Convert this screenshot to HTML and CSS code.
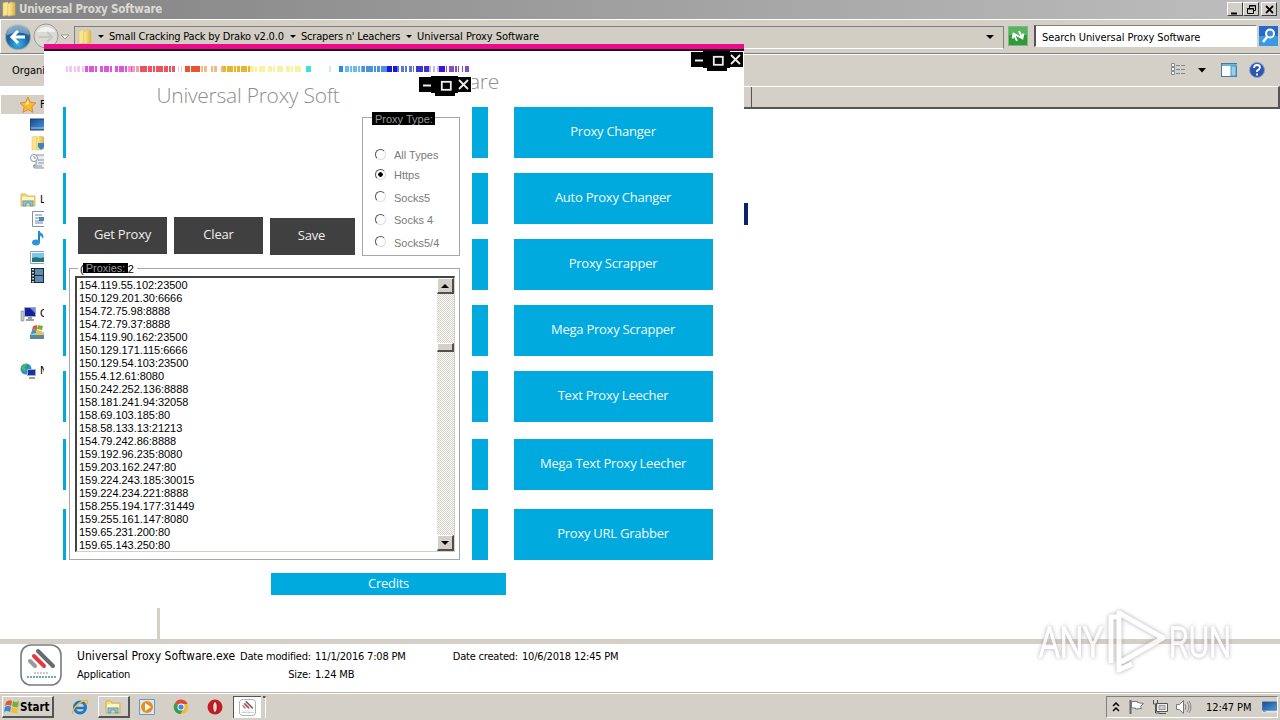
FILE: index.html
```html
<!DOCTYPE html>
<html lang="en">
<head>
    <meta charset="UTF-8">
    <meta name="viewport" content="width=device-width, initial-scale=1.0">
    <title>Universal Proxy Software</title>
    <link rel="stylesheet" href="styles.css">
</head>
<body>
<svg width="0" height="0" class="defs">
    <defs>
        <linearGradient id="gold" x1="0" x2="1"><stop offset="0" stop-color="#fdf0a6"/><stop offset="1" stop-color="#dfb23c"/></linearGradient>
        <radialGradient id="blue" cx=".5" cy=".8" r=".8"><stop offset="0" stop-color="#38b4e8"/><stop offset=".6" stop-color="#175f9e"/><stop offset="1" stop-color="#4b85af"/></radialGradient>
        <linearGradient id="screen" x1="0" y1="0" x2="1" y2="1"><stop offset="0" stop-color="#174a91"/><stop offset="1" stop-color="#4e9be0"/></linearGradient>
        <symbol id="folder" viewBox="0 0 16 16"><path d="M2 2l5-1v13l-5 1z" fill="#f8e58c" stroke="#e0c46c" stroke-width=".6"/><path d="M7 3l3-2 4 1v12l-7 1z" fill="url(#gold)" stroke="#dcb85a" stroke-width=".6"/></symbol>
        <symbol id="library" viewBox="0 0 16 16"><path d="M1 2h5l1 2h8v10H1z" fill="#f5dc77" stroke="#c8a440" stroke-width=".7"/><path d="M2 5h12v3H2z" fill="#fff6c2"/><path d="M3 14V9h10v5h-3v-3H6v3z" fill="#83c6ea" stroke="#3c88b9" stroke-width=".6"/></symbol>
        <symbol id="appicon" viewBox="0 0 42 42"><rect x="1" y="1" width="40" height="40" rx="10" fill="#fff" stroke="#777c80" stroke-width="1.6"/><g stroke-linecap="round" stroke-width="4"><path d="M18 7l15 15" stroke="#666b6f"/><path d="M14 12l10 10" stroke="#e23b3e"/><path d="M10 17l5 5" stroke="#96999e"/></g><path d="M14 29h14" stroke="#c8cccc" stroke-width="2" stroke-dasharray="2 1"/><path d="M7 33h29" stroke="#76a9a9" stroke-width="2" stroke-dasharray="2 1"/></symbol>
        <symbol id="winbtns" viewBox="0 0 52 20"><path d="M0 1h12V0h27v1h13v15H39v1h-3v3H16v-3h-4v-1H0z"/><path d="M4 9.500h8" stroke="#eee" stroke-width="2"/><rect x="22.8" y="5.800" width="9" height="8" fill="none" stroke="#eee" stroke-width="1.8"/><path d="M40 4l9 9m0-9l-9 9" stroke="#eee" stroke-width="1.8"/></symbol>
        <symbol id="desktop" viewBox="0 0 16 12"><path d="M0 0h16v12H0z" fill="#dce6ee"/><path d="M.5.5h15v9H.5z" fill="url(#screen)" stroke="#1a4274" stroke-width=".5"/><path d="M1 10.5h3" stroke="#3a7fb8"/></symbol>
    </defs>
</svg>

<div class="explorer">
    <div class="titlebar">
        <svg class="ico16"><use href="#folder"/></svg>
        <span class="caption">Universal Proxy Software</span>
        <div class="sysbtns">
            <svg width="16" height="14"><path d="M3 10.5h6" stroke="#000" stroke-width="2"/></svg>
            <svg width="16" height="14"><path d="M5.500 5V2.500h6v5H9.500M5 3h7M3.500 5.500h6v5h-6zM3 6h7" fill="none" stroke="#000"/></svg>
            <svg width="16" height="14" class="close"><path d="M4 3l7 7m0-7l-7 7" stroke="#000" stroke-width="1.8"/></svg>
        </div>
    </div>

    <div class="navbar">
        <svg class="backfwd" width="68" height="30">
            <circle cx="14" cy="16" r="13" fill="#a2a6a6"/><circle cx="14" cy="16" r="12" fill="url(#blue)"/>
            <path d="M3 14a11 11 0 0 1 22 0q-10-5-22 0z" fill="#fff" opacity=".35"/>
            <path d="M21 16H8m6-6l-6 6 6 6" fill="none" stroke="#fff" stroke-width="3"/>
            <circle cx="42" cy="15" r="12" fill="#dcdad5" stroke="#9b9994"/><path d="M33 11a10 9 0 0 1 18 0z" fill="#f2f1ee"/><path d="M35 16h13m-5-5l5 5-5 5" fill="none" stroke="#c9c7c2" stroke-width="2"/>
            <path d="M57 14h8l-4 4z" fill="#fff" stroke="#888" stroke-width=".8"/>
        </svg>
        <div class="address">
            <svg class="ico16"><use href="#folder"/></svg>
            <i class="arrow"></i><span class="crumb c1">Small Cracking Pack by Drako v2.0.0</span>
            <i class="arrow"></i><span class="crumb c2">Scrapers n' Leachers</span>
            <i class="arrow"></i><span class="crumb c3">Universal Proxy Software</span>
            <i class="arrow big"></i>
        </div>
        <svg class="refresh" width="20" height="20"><rect x=".5" y=".5" width="19" height="19" fill="#2d9b38" stroke="#86b288"/><path d="M1 1h18v8H1z" fill="#58b45c"/><path d="M7 14V7M4 10l3-4 3 4M13 6v7m-3-3l3 4 3-4" fill="none" stroke="#fff" stroke-width="1.900" transform="rotate(-25 10 10)"/></svg>
        <div class="search"><span>Search Universal Proxy Software</span></div>
        <svg class="mag" width="19" height="20"><rect width="19" height="20" fill="#2669c9"/><path d="M0 10h19v10H0z" fill="#3a9ae4"/><circle cx="11" cy="7.500" r="4" fill="#3f86d6" stroke="#fff" stroke-width="2"/><path d="M8 11l-4 5" stroke="#fff" stroke-width="2.500"/></svg>
    </div>

    <div class="toolbar">
        <span class="organize">Organi</span>
        <svg class="views" width="100" height="18">
            <g fill="#fff" stroke="#7b8a93"><path d="M1.500 1.500h3v3h-3zM1.500 5.500h3v3h-3zM1.500 9.500h3v3h-3z"/></g><path d="M6 3.500h10M6 7.500h10M6 11.500h10" stroke="#7b8a93" stroke-dasharray="4 1"/>
            <path d="M28 6h8l-4 4.500z"/>
            <rect x="51.500" y="1.500" width="15" height="13" fill="#fff" stroke="#467b9e"/><path d="M52 3h15" stroke="#71b3d7" stroke-width="2"/><path d="M61 4h5v10h-5z" fill="#99d0e9" stroke="#4c94bc"/>
            <circle cx="87" cy="8" r="7.500" fill="#2c56b2" stroke="#8ba0c9"/><path d="M84 6q0-3 3-3t3 2.500q0 1.500-3 3.200V10m0 1.500v2" fill="none" stroke="#fff" stroke-width="1.800"/>
        </svg>
    </div>

    <div class="main">
        <div class="sidebar">
            <div class="group fav">
                <div class="item head"><svg class="ico16"><path d="M8 0l2.400 5.300 5.600.6-4.200 3.800 1.300 5.700L8 12.500l-5.100 2.900 1.300-5.700L0 5.900l5.600-.6z" fill="#fdb935" stroke="#d9801c" stroke-width=".8"/><path d="M8 3l1 4-4 1z" fill="#fff2a5"/></svg><span>F</span></div>
                <div class="item"><svg class="ico16"><rect y="3" width="16" height="11" fill="url(#screen)" stroke="#1a3e70"/><path d="M1 12h15" stroke="#a2c4db"/></svg></div>
                <div class="item"><svg class="ico16"><use href="#folder"/><path d="M8 8h6v4l-3 3-3-3z" fill="#3287c9"/></svg></div>
                <div class="item"><svg class="ico16"><path d="M6 1h9v13H4v-3h2z" fill="#e8edf0" stroke="#8396a3"/><circle cx="4" cy="4" r="3.500" fill="#fff" stroke="#8396a3"/><path d="M4 2v2h2M8 6h6M8 9h6M3 12h9" stroke="#8396a3" fill="none"/></svg></div>
            </div>
            <div class="group lib">
                <div class="item head"><svg class="ico16"><use href="#library"/></svg><span>L</span></div>
                <div class="item"><svg class="ico16"><path d="M2.500.5h13v15h-13z" fill="#fff" stroke="#7d94a6"/><path d="M5 4h7M5 7h4M5 10h8M5 12h8" stroke="#6b87a3"/><path d="M9 6h5v4H9z" fill="#4b87bd"/></svg></div>
                <div class="item"><svg class="ico16"><path d="M9 1v11" stroke="#2581c8" stroke-width="2"/><ellipse cx="6" cy="12.500" rx="4" ry="3" fill="#2f93d9"/><path d="M9 0c1 4 6 3 4 9-1-3-3-3-4-4z" fill="#2f93d9"/></svg></div>
                <div class="item"><svg class="ico16"><path d="M.5 2.500h15v12H.5z" fill="#fff" stroke="#8ca4b0"/><path d="M2 4h14v5H2z" fill="#7ec5ef"/><path d="M2 13V9l4-1 4 1 6-1v5z" fill="#28727b"/></svg></div>
                <div class="item"><svg class="ico16"><path d="M1 0h15v15H1z" fill="#20292e"/><path d="M5 1h8v6H5zM5 8h8v6H5z" fill="#4a91c6"/><path d="M3 1v14M15 1v14" stroke="#fff" stroke-width="1.500" stroke-dasharray="1.500 1.500"/><path d="M6 5l3-2 3 3M6 12l3-2 3 3" stroke="#c8734b" fill="none"/></svg></div>
            </div>
            <div class="group comp">
                <div class="item head"><svg class="ico16"><path d="M1 5h3v10H1z" fill="#bfc9c6" stroke="#7f8c89" stroke-width=".6"/><path d="M4.500 1.500h11v9h-11z" fill="#151fa3" stroke="#a3adb5"/><path d="M10 2h5v5z" fill="#6591e3"/><path d="M8 11h4v2h2v2H6v-2h2z" fill="#97a2aa"/></svg><span>C</span></div>
                <div class="item"><svg class="ico16"><path d="M0 9h16v5H0z" fill="#5b8799"/><path d="M1 7h14l1 3H0z" fill="#b2c7ce"/><path d="M3 1l4-1v4l-5 1z" fill="#e65b25"/><path d="M8 0l5 1-1 4-5-1z" fill="#78ae37"/><path d="M2 5l5-1-1 4-5 1z" fill="#3c93d4"/><path d="M7 5l5 1-1 4-5-1z" fill="#f7c12c"/></svg></div>
            </div>
            <div class="group net">
                <div class="item head"><svg class="ico16"><circle cx="6" cy="6" r="5.500" fill="#2493c9"/><path d="M1 5q3-5 6-4-1 3-2 3t1 3q-2 3-5-2z" fill="#59b848"/><path d="M7.500 6.500h8v6h-8z" fill="#1732a9" stroke="#a7b1ba"/><path d="M9 15h6" stroke="#7d858d" stroke-width="1.500"/></svg><span>N</span></div>
            </div>
        </div>
        <div class="splitter"></div>
        <div class="files">
            <div class="colhead"></div>
            <div class="selected"></div>
        </div>
    </div>

    <div class="details">
        <svg class="exe" width="42" height="42"><use href="#appicon"/></svg>
        <div class="names"><span class="fname">Universal Proxy Software.exe</span><span class="ftype">Application</span></div>
        <dl class="facts">
            <dt>Date modified:</dt><dd>11/1/2016 7:08 PM</dd>
            <dt>Size:</dt><dd>1.24 MB</dd>
        </dl>
        <dl class="facts created">
            <dt>Date created:</dt><dd>10/6/2018 12:45 PM</dd>
        </dl>
    </div>
</div>

<div class="app">
    <div class="accent"></div>
    <svg class="winbtns" width="52" height="20"><use href="#winbtns"/></svg>
    <div class="apptitle">are</div>
    <div class="tiles">
        <b></b><b></b><div class="tile">Proxy Changer</div>
        <b></b><b></b><div class="tile">Auto Proxy Changer</div>
        <b></b><b></b><div class="tile">Proxy Scrapper</div>
        <b></b><b></b><div class="tile">Mega Proxy Scrapper</div>
        <b></b><b></b><div class="tile">Text Proxy Leecher</div>
        <b></b><b></b><div class="tile">Mega Text Proxy Leecher</div>
        <b></b><b></b><div class="tile">Proxy URL Grabber</div>
    </div>
    <div class="credits">Credits</div>

    <div class="child">
        <svg class="strip" width="406" height="7">
            <g stroke-width="6" fill="none">
                <path d="M0 3h28" stroke="#f3c4f6" stroke-dasharray="2 1 3 2"/>
                <path d="M19 3h50" stroke="#df54dc" stroke-dasharray="3 1 5 1 2 3"/>
                <path d="M62 3h20" stroke="#f39bb8" stroke-dasharray="3 1"/>
                <path d="M74 3h35" stroke="#e8555e" stroke-dasharray="7 1 4 1 2 1"/>
                <path d="M112 3h5" stroke="#f8c6c6" stroke-dasharray="1 2"/>
                <path d="M119 3h17" stroke="#e65432" stroke-dasharray="5 1 9 1"/>
                <path d="M135 3h22" stroke="#f7b984" stroke-dasharray="2 1 3 4"/>
                <path d="M157 3h28" stroke="#e8b52c" stroke-dasharray="3 1 6 1 2 1"/>
                <path d="M184 3h52" stroke="#f9f3a0" stroke-dasharray="4 1 2 2 6 3"/>
                <path d="M240 3h5" stroke="#35e5de"/><path d="M263 3h2" stroke="#c5efec"/>
                <path d="M273 3h4" stroke="#238ce8"/><path d="M279 3h18" stroke="#6bbaf0" stroke-dasharray="4 1 2 1"/>
                <path d="M296 3h28" stroke="#4a91df" stroke-dasharray="3 1 7 1 2 1"/>
                <path d="M321 3h10" stroke="#1717d7" stroke-dasharray="5 1"/>
                <path d="M331 3h17" stroke="#5578df" stroke-dasharray="2 2 3 1"/>
                <path d="M350 3h14" stroke="#3b35cf" stroke-dasharray="7 1"/><path d="M363 3h16" stroke="#c7b4ec" stroke-dasharray="2 2"/>
                <path d="M373 3h6" stroke="#3814d5"/><path d="M380 3h23" stroke="#884cc2" stroke-dasharray="1 2 5 1 2 1 1 3"/>
            </g>
        </svg>
        <svg class="winbtns" width="52" height="20"><use href="#winbtns"/></svg>
        <h1>Universal Proxy Soft</h1>
        <div class="controls">
            <div class="btn">Get Proxy</div>
            <div class="btn">Clear</div>
            <div class="btn save">Save</div>
            <div class="types">
                <span class="legend">Proxy Type:</span>
                <label><i class="radio"></i><span>All Types</span></label>
                <label><i class="radio on"></i><span>Https</span></label>
                <label><i class="radio"></i><span>Socks5</span></label>
                <label><i class="radio"></i><span>Socks 4</span></label>
                <label><i class="radio"></i><span>Socks5/4</span></label>
            </div>
        </div>
        <div class="proxies">
            <div class="count">(<span>Proxies:</span>2</div>
            <div class="listbox">
                <ul>
                    <li>154.119.55.102:23500</li>
                    <li>150.129.201.30:6666</li>
                    <li>154.72.75.98:8888</li>
                    <li>154.72.79.37:8888</li>
                    <li>154.119.90.162:23500</li>
                    <li>150.129.171.115:6666</li>
                    <li>150.129.54.103:23500</li>
                    <li>155.4.12.61:8080</li>
                    <li>150.242.252.136:8888</li>
                    <li>158.181.241.94:32058</li>
                    <li>158.69.103.185:80</li>
                    <li>158.58.133.13:21213</li>
                    <li>154.79.242.86:8888</li>
                    <li>159.192.96.235:8080</li>
                    <li>159.203.162.247:80</li>
                    <li>159.224.243.185:30015</li>
                    <li>159.224.234.221:8888</li>
                    <li>158.255.194.177:31449</li>
                    <li>159.255.161.147:8080</li>
                    <li>159.65.231.200:80</li>
                    <li>159.65.143.250:80</li>
                </ul>
                <div class="scroll">
                    <div class="sbtn"><svg width="12" height="12"><path d="M2 8h8L6 4z"/></svg></div>
                    <div class="thumb"></div>
                    <div class="sbtn"><svg width="12" height="12"><path d="M2 4h8L6 8z"/></svg></div>
                </div>
            </div>
        </div>
    </div>
</div>

<svg class="watermark" width="240" height="90">
    <g fill="none" stroke="#fff" stroke-width="5" stroke-linejoin="round">
        <path d="M80 62V16h8M88 60V12l44 25-42 24M88 60v9l13-6"/>
    </g>
    <text x="8" y="56" textLength="64" lengthAdjust="spacingAndGlyphs">ANY</text>
    <text x="138" y="56" textLength="62" lengthAdjust="spacingAndGlyphs">RUN</text>
</svg>

<div class="taskbar">
    <div class="start"><svg width="16" height="16"><path d="M2 3q3-3 6-1L7 7Q4 5 1 7z" fill="#e8572a"/><path d="M9 2q3 2 6 0l-1 6q-3 1-6-1z" fill="#74b43b"/><path d="M1 8q3-2 6 0l-1 5q-3-2-6 0z" fill="#3a87d6"/><path d="M8 8q3 2 6 1l-1 5q-3 1-6-1z" fill="#f5bf2b"/></svg><span>Start</span></div>
    <div class="quick">
        <div class="q"><svg class="ico16"><circle cx="8" cy="8.500" r="5.500" fill="none" stroke="#1c78c9" stroke-width="3"/><path d="M4 9h10" stroke="#1c78c9" stroke-width="2.500"/><path d="M1 15C-1 11 8 1 15 1.500q2 1-1 4" fill="none" stroke="#eeb931" stroke-width="1.500"/></svg></div>
        <div class="q raised"><svg class="ico16"><use href="#library"/></svg></div>
        <div class="q"><svg class="ico16"><path d="M.5.5h15v15H.5z" fill="#d8eaf5" stroke="#5f9cc8"/><circle cx="8" cy="8" r="6" fill="#f18a1a"/><path d="M6 4l6 4-6 4z" fill="#fff"/></svg></div>
        <div class="q"><svg class="ico16"><circle cx="8" cy="8" r="7" fill="#f0bd2d"/><path d="M8 8L2 4a7 7 0 0 1 12.500 1H8z" fill="#dc4a3b"/><path d="M8 8l-6-4a7 7 0 0 0 5.500 11L11 9z" fill="#369c52"/><circle cx="8" cy="8" r="3.500" fill="#fff"/><circle cx="8" cy="8" r="2.600" fill="#4384e8"/></svg></div>
        <div class="q"><svg class="ico16"><circle cx="8" cy="8" r="7.500" fill="#c41c22"/><ellipse cx="8" cy="8" rx="2.300" ry="5.500" fill="#f1d8d6" stroke="#921216"/></svg></div>
        <div class="q active"><svg width="17" height="17"><use href="#appicon"/></svg></div>
        <div class="edge"></div>
    </div>
    <div class="tray">
        <svg width="12" height="16"><path d="M3 7l3-3 3 3M3 12l3-3 3 3" fill="none" stroke="#000" stroke-width="1.500"/></svg>
        <svg width="17" height="16" class="flag"><path d="M2.500 1v14" stroke="#666" stroke-width="2"/><path d="M3.500 2.500h6v1l6 1-3 3 1 2-6 .5v-1h-4z" fill="#fff" stroke="#777"/></svg>
        <svg width="17" height="16" class="lan"><path d="M4.500 4.500h11v8h-11zM7 14.500h7" fill="#eee" stroke="#555"/><path d="M7 6.500h6v4H7z" fill="#ccc" stroke="#999"/><path d="M1.500 1v4h4V1M3.500 5v9h4" fill="none" stroke="#555"/></svg>
        <svg width="17" height="16" class="vol"><path d="M1.500 5.500h3l4-4v13l-4-4h-3z" fill="#fff" stroke="#777"/><path d="M10 5q2 3 0 6M12 3q4 5 0 10M14 2q4 6 0 12" fill="none" stroke="#888"/></svg>
        <span class="clock">12:47 PM</span>
        <svg width="15" height="12" class="desk"><use href="#desktop"/></svg>
    </div>
</div>
</body>
</html>
```
FILE: styles.css
```css
* {
    box-sizing: border-box;
}

body {
    margin: 0;
    width: 1280px;
    height: 720px;
    overflow: hidden;
    background: #fff;
    color: #000;
    font-family: "DejaVu Sans Condensed", "DejaVu Sans", sans-serif;
    font-size: 11px;
    line-height: 14px;
    white-space: nowrap;
    display: flex;
    flex-direction: column;
}

svg {
    display: block;
    flex: none;
}

.defs {
    position: absolute;
}

.ico16 {
    width: 16px;
    height: 16px;
}

/* explorer window */
.explorer {
    height: 692px;
    display: flex;
    flex-direction: column;
}

.titlebar {
    height: 19px;
    background: linear-gradient(90deg, #838383, #bebebe);
    display: flex;
    align-items: center;
    padding: 0 3px 1px 1px;
}

.caption {
    margin-left: 2px;
    color: #dcdad4;
    font-weight: bold;
    font-size: 11.5px;
    letter-spacing: -.2px;
}

.sysbtns {
    margin-left: auto;
    display: flex;
}

.sysbtns svg {
    background: #d4d0c8;
    border-top: 1px solid #fff;
    border-left: 1px solid #fff;
    border-right: 1px solid #404040;
    border-bottom: 1px solid #404040;
}

.sysbtns .close {
    margin-left: 2px;
}

.navbar {
    height: 35px;
    background: #d4d0c8;
    border-top: 1px solid #fff;
    border-bottom: 1px solid #808080;
    box-shadow: inset 1px 0 #fff, inset 0 2px #d4d0c8;
    display: flex;
    padding: 0 2px 0 4px;
}

.backfwd {
    margin-top: 1px;
}

.address {
    width: 930px;
    height: 23px;
    margin: 6px 0 0 2px;
    border: 1px solid #808080;
    border-bottom-color: #fff;
    display: flex;
    align-items: center;
    padding-left: 2px;
    background: #d2cec4;
}

.address .ico16 {
    margin-top: -2px;
}

.crumb {
    margin-top: -2px;
    width: 175px;
    letter-spacing: -.2px;
}

.c2 {
    width: 99px;
}

.c3 {
    letter-spacing: -.05px;
}

.arrow {
    border: 3px solid transparent;
    border-top: 3px solid #000;
    border-bottom: 0;
    margin: -2px 5px 0 6px;
}

.address .ico16 + .arrow {
    margin-left: 5px;
}

.arrow.big {
    border-width: 4px 4px 0;
    margin-left: auto;
    margin-right: 9px;
}

.refresh {
    margin: 6px 0 0 4px;
}

.search {
    width: 223px;
    height: 22px;
    margin: 5px 0 0 6px;
    background: #fff;
    border: 1px solid #fff;
    border-top: 1px solid #808080;
    border-left: 2px solid #555;
    padding: 5px 0 0 6px;
    letter-spacing: -.06px;
}

.mag {
    margin: 6px 0 0 auto;
}

.toolbar {
    height: 32px;
    background: #d4d0c8;
    border-top: 1px solid #fff;
    display: flex;
    align-items: center;
}

.organize {
    margin-left: 12px;
}

.views {
    margin-left: auto;
    margin-right: 10px;
}

.main {
    flex: 1;
    display: flex;
}

.sidebar {
    width: 157px;
    padding-top: 9px;
}

.item {
    height: 19px;
    padding-left: 30px;
    display: flex;
    align-items: center;
}

.item.head {
    padding-left: 20px;
}

.item span {
    margin-left: 4px;
}

.fav .head {
    background: #d4d0c8;
    margin-left: 1px;
    padding-left: 19px;
}

.lib {
    margin-top: 19px;
}

.comp {
    margin-top: 19px;
}

.net {
    margin-top: 19px;
}

.splitter {
    width: 3px;
    height: 553px;
    background: #d4d0c8;
}

.files {
    flex: 1;
}

.colhead {
    height: 23px;
    margin-left: 584px;
    background: #d4d0c8;
    border-top: 1px solid #fff;
    border-right: 2px solid #555;
    border-bottom: 2px solid #555;
    box-shadow: inset 7px 0 #d4d0c8, inset 8px 0 #555;
}

.selected {
    width: 4px;
    height: 22px;
    margin: 94px 0 0 584px;
    background: #0a246a;
}

.details {
    height: 53px;
    border-top: 5px solid #d4d0c8;
    display: flex;
    padding-left: 20px;
}

.names {
    margin-left: 15px;
    width: 161px;
}

.names span {
    display: block;
    margin-top: 5px;
    letter-spacing: -.2px;
}

.names .fname {
    font-size: 12px;
    letter-spacing: .05px;
}

.facts {
    display: grid;
    grid-template-columns: 73px 134px;
    row-gap: 4px;
    margin: 6px 0 0;
    align-content: start;
    letter-spacing: -.18px;
}

.facts dt {
    text-align: right;
}

.facts dd {
    margin: 0 0 0 4px;
}

.facts.created {
    letter-spacing: -.2px;
}

/* application window */
.app {
    position: absolute;
    left: 44px;
    top: 44px;
    width: 700px;
    height: 564px;
    background: #fff;
    font-family: "Open Sans", "Noto Sans", sans-serif;
}

.accent {
    height: 7px;
    background: #ec0a8c;
    border-bottom: 2px solid #2a0a1c;
}

.app > .winbtns {
    position: absolute;
    right: 1px;
    top: 7px;
}

.apptitle,
.child h1 {
    margin: 0;
    color: #8e8e8e;
    font-size: 21px;
    font-weight: 300;
    line-height: 30px;
    letter-spacing: -.25px;
}

.apptitle {
    width: 455px;
    margin-top: 15px;
    text-align: right;
}

.tiles {
    margin: 11px 0 0 19px;
    display: grid;
    grid-template-columns: 200px 199px 199px;
    grid-template-rows: 51px 51px 51px 51px 53px 55px 51px;
    column-gap: 26px;
    row-gap: 15px;
}

.tiles > * {
    height: 51px;
    background: #00a9de;
}

.tile,
.credits {
    color: #f0faff;
    font-size: 13px;
    line-height: 49px;
    text-align: center;
    letter-spacing: -.25px;
}

.tile {
    padding-right: 1px;
}

.credits {
    width: 235px;
    height: 22px;
    margin: 13px 0 0 227px;
    background: #00a9de;
    line-height: 21px;
}

.child {
    position: absolute;
    left: 22px;
    top: 22px;
    width: 406px;
    height: 494px;
    background: #fff;
}

.child .winbtns {
    position: absolute;
    right: 1px;
    top: 10px;
}

.child h1 {
    margin: 7px 42px 0 0;
    text-align: center;
}

.controls {
    margin: 7px 12px 0;
    display: flex;
    align-items: flex-end;
    gap: 7px;
}

.btn {
    width: 89px;
    height: 37px;
    margin-bottom: 2px;
    background: #404040;
    color: #eee;
    font-size: 13px;
    line-height: 35px;
    text-align: center;
    letter-spacing: -.2px;
}

.btn.save {
    width: 85px;
    margin-bottom: 1px;
    padding-right: 2px;
}

.types {
    width: 98px;
    height: 139px;
    border: 1px solid #a6a6a6;
    font-family: "Liberation Sans", Arial, sans-serif;
    color: #7a7a7a;
    padding-left: 12px;
}

.legend {
    display: block;
    width: 63px;
    height: 13px;
    margin: -6px 0 23px -3px;
    padding-left: 3px;
    background: #000;
    color: #999;
    line-height: 14px;
}

.types label {
    display: flex;
    align-items: center;
    height: 14px;
    margin-bottom: 8.600px;
}

.types label:nth-of-type(1) {
    margin-bottom: 6px;
}

.radio {
    width: 11px;
    height: 11px;
    margin: -2px 8px 0 0;
    border-radius: 50%;
    border: 1.500px solid #555;
    border-right-color: #ddd;
    border-bottom-color: #ddd;
}

.radio.on {
    background: radial-gradient(circle, #000 2px, #fff 2.500px);
}

.proxies {
    width: 391px;
    height: 292px;
    margin: 12px 0 0 3px;
    border: 1px solid #a6a6a6;
    padding: 0 5px;
    font-family: "Liberation Sans", Arial, sans-serif;
}

.count {
    display: flex;
    width: 59px;
    height: 12px;
    margin: -6px 0 1px 3px;
    padding-left: 2px;
    background: #fff;
    line-height: 13px;
}

.count span {
    width: 45px;
    height: 10px;
    margin-left: -1px;
    padding-left: 3px;
    background: #000;
    color: #999;
    line-height: 11px;
}

.listbox {
    width: 380px;
    height: 276px;
    border: 1px solid #d4d0c8;
    border-top: 2px solid #444;
    border-left: 2px solid #444;
    display: flex;
    justify-content: space-between;
}

.listbox ul {
    list-style: none;
    margin: 0;
    padding: 1px 0 0 2px;
    line-height: 13px;
    letter-spacing: -.04px;
}

.scroll {
    width: 17px;
    display: flex;
    flex-direction: column;
    background: repeating-conic-gradient(#d4d0c8 0 25%, #fff 0 50%) 0 0 / 2px 2px;
}

.sbtn,
.thumb {
    height: 16px;
    padding: 1px;
    background: #d4d0c8;
    border: 1px solid #fff;
    border-right: 2px solid #505050;
    border-bottom: 2px solid #505050;
}

.thumb {
    height: 9px;
    margin: 49px 0 auto;
}

/* watermark */
.watermark {
    position: absolute;
    left: 1031px;
    top: 601px;
    overflow: visible;
    filter: drop-shadow(0 0 2px #999);
    opacity: .8;
}

.watermark text {
    font-family: "Roboto", sans-serif;
    font-size: 42px;
    font-weight: 300;
    fill: #fff;
    stroke: #fff;
    stroke-width: 1.500px;
}

/* taskbar */
.taskbar {
    height: 28px;
    background: #d4d0c8;
    border-top: 1px solid #bbb7ae;
    box-shadow: inset 0 1px #fff;
    display: flex;
    padding: 3px 2px 2px;
}

.start,
.raised {
    border: 1px solid #fff;
    border-right: 2px solid #555;
    border-bottom: 2px solid #555;
}

.start {
    width: 52px;
    height: 22px;
    display: flex;
    align-items: center;
    padding-left: 1px;
    font-weight: bold;
    font-size: 11.500px;
}

.quick {
    display: flex;
    margin-left: 10px;
}

.q {
    width: 32px;
    height: 22px;
    margin-right: 1.700px;
    display: flex;
    align-items: center;
    justify-content: center;
}

.q.active {
    width: 28px;
    background: #fff;
    border-top: 1px solid #555;
    border-left: 1px solid #555;
    margin-left: 1px;
}

.edge {
    width: 3px;
    height: 22px;
    border-right: 1px solid #fff;
    border-top: 2px solid #555;
}

.tray {
    width: 172px;
    height: 22px;
    margin-left: auto;
    border: 1px solid #808080;
    border-right-color: #fff;
    border-bottom-color: #fff;
    display: flex;
    align-items: center;
    padding-left: 3px;
}

.flag {
    margin-left: 6px;
}

.lan {
    margin-left: 7px;
}

.vol {
    margin-left: 6px;
}

.clock {
    margin: 1px 0 0 14px;
    letter-spacing: -.1px;
}

.desk {
    margin-left: auto;
}
```
